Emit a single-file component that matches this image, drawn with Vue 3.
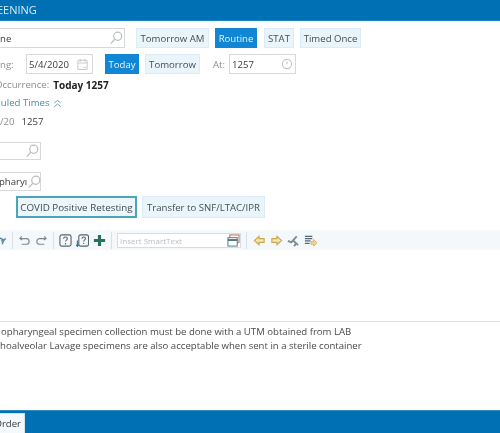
<script setup>
const frequency = [
  { label: 'Tomorrow AM', size: 'w-am' },
  { label: 'Routine', size: 'w-routine', active: true },
  { label: 'STAT', size: 'w-stat' },
  { label: 'Timed Once', size: 'w-timed' },
]
</script>

<template>
  <div class="page">
    <header class="title"><span>EENING</span></header>

    <main class="form">
      <div class="row row-priority">
        <label class="field field-name">
          <span class="value">ne</span>
          <svg class="search" viewBox="0 0 16 16"><circle cx="10" cy="6" r="4.600" /><path d="M6.600 9.400l-4.600 5" /></svg>
        </label>
        <div class="pills">
          <button v-for="f in frequency" :key="f.label" class="pill" :class="[f.size, { active: f.active }]">{{ f.label }}</button>
        </div>
      </div>

      <div class="row row-date">
        <span class="label cut-label">ng:</span>
        <label class="field field-date">
          <span class="value">5/4/2020</span>
          <svg class="cal" viewBox="0 0 14 14"><rect x="2" y="2.500" width="10" height="10" rx="1" /><path d="M2 5.500h10M4.500 1v3M9.500 1v3M8 10h3" /></svg>
        </label>
        <button class="pill active today">Today</button>
        <button class="pill w-tomorrow">Tomorrow</button>
        <span class="label at">At:</span>
        <label class="field field-time">
          <span class="value">1257</span>
          <svg class="clock" viewBox="0 0 14 14"><circle cx="7" cy="7" r="5.400" /><path d="M7 4v3.400" /></svg>
        </label>
      </div>

      <div class="occurrence"><span class="label">Occurrence:</span><b>Today 1257</b></div>
      <div class="schedule"><span>duled Times</span>
        <svg viewBox="0 0 10 10"><path d="M1.500 4.500L5 1.500l3.500 3M1.500 8.500L5 5.500l3.500 3" /></svg>
      </div>
      <div class="times"><span class="label">/20</span><span>1257</span></div>

      <label class="field field-short first-short">
        <svg class="search" viewBox="0 0 16 16"><circle cx="10" cy="6" r="4.600" /><path d="M6.600 9.400l-4.600 5" /></svg>
      </label>
      <label class="field field-short second-short">
        <span class="value">pharyı</span>
        <svg class="search" viewBox="0 0 16 16"><circle cx="10" cy="6" r="4.600" /><path d="M6.600 9.400l-4.600 5" /></svg>
      </label>

      <div class="row row-reason">
        <button class="pill selected">COVID Positive Retesting</button>
        <button class="pill wide">Transfer to SNF/LTAC/IPR</button>
      </div>

      <div class="toolbar">
        <svg class="tool swirl" viewBox="0 0 7 14"><path d="M-1 4l5 2.500L2 11" /><path d="M1 8l5-3" /></svg>
        <i class="sep"></i>
        <svg class="tool" viewBox="0 0 14 14"><path d="M4 2.500L2 5l2.500 1.500M2.500 5H9a3 3 0 010 6H4" /></svg>
        <svg class="tool" viewBox="0 0 14 14"><path d="M10 2.500L12 5 9.500 6.500M11.500 5H5a3 3 0 000 6h5" /></svg>
        <i class="sep"></i>
        <svg class="tool help" viewBox="0 0 14 14"><rect x="1" y="1" width="12" height="12" rx="2" /><path d="M5 5.200a2 2 0 114 0c0 1.300-2 1.500-2 3M7 9.800v1.400" /></svg>
        <svg class="tool help" viewBox="0 0 14 14"><rect x="3" y="1" width="10.500" height="12" rx="2" /><path d="M6.500 5a1.800 1.800 0 113.600 0c0 1.300-1.800 1.500-1.800 3M8.300 9.500v1.400" /><path class="teal" d="M1.500 7v6M0 11.500l1.500 2 1.500-2" /></svg>
        <svg class="tool plus" viewBox="0 0 14 14"><path d="M5.300 1h3.400v4.300H13v3.400H8.700V13H5.300V8.700H1V5.300h4.300z" /></svg>
        <i class="sep"></i>
        <label class="smart">
          <span>Insert SmartText</span>
          <svg viewBox="0 0 14 14"><rect x="3" y="1" width="10" height="8" fill="#f3f6f8" stroke="#b56a5f" /><rect x="1" y="4" width="10" height="9" fill="#fff" stroke="#4d7284" /><path d="M1 6.500h10" stroke="#4d7284" stroke-width="2" /></svg>
        </label>
        <i class="sep after-smart"></i>
        <svg class="tool arrow" viewBox="0 0 14 14"><path d="M6.500 2.500L1.500 7l5 4.500V9H12V5H6.500z" /></svg>
        <svg class="tool arrow" viewBox="0 0 14 14"><path d="M7.500 2.500l5 4.500-5 4.500V9H2V5h5.500z" /></svg>
        <svg class="tool check" viewBox="0 0 14 14"><path d="M1 7.500l3.500 1.500L10.500 2.500" /><path d="M6 6.500l6 5.500" /><path d="M7.500 13l2.500-3" /></svg>
        <svg class="tool list" viewBox="0 0 14 14"><path d="M1 2.500h8M1 5h8M1 7.500h6M1 10h5" /><path class="gold" d="M7.500 8h3V6l3.500 3.500-3.500 3.500v-2h-3z" /></svg>
      </div>

      <div class="notes-space"></div>

      <section class="notes">
        <p class="first-note">opharyngeal specimen collection must be done with a UTM obtained from LAB</p>
        <p>hoalveolar Lavage specimens are also acceptable when sent in a sterile container</p>
      </section>
    </main>

    <footer class="footer"><div class="tab"><span>Order</span></div></footer>
  </div>
</template>

<style>
html, body { margin: 0; background: #fff; }
</style>

<style scoped>
.page {
  width: 500px;
  height: 433px;
  display: flex;
  flex-direction: column;
  overflow: hidden;
  background: #fff;
  color: #3c3c3c;
  font: 9.600px "Open Sans", "Noto Sans", sans-serif;
  filter: blur(0.35px);
}
.title {
  height: 21px;
  flex: none;
  background: #0070b5;
  color: #d9edf7;
  font-size: 11px;
  line-height: 20px;
  border-bottom: 1px solid #1c88c2;
  box-sizing: border-box;
  overflow: hidden;
}
.title span { display: block; margin-left: -3px; }
.form { flex: 1; display: flex; flex-direction: column; min-height: 0; }
.row { display: flex; align-items: center; }
.row-priority { margin-top: 7px; height: 20px; }
.row-date { margin-top: 6px; height: 20px; }
.field {
  display: flex;
  align-items: center;
  justify-content: space-between;
  box-sizing: border-box;
  height: 20px;
  border: 1px solid #d8d8d8;
  background: #fff;
  color: #3c3c3c;
  padding: 0 1px 0 2px;
}
.field-name { width: 126px; margin-left: -1px; border-left: 0; padding-left: 1px; }
.value { white-space: nowrap; }
.search { width: 14px; height: 14px; flex: none; fill: none; stroke: #b9bfc2; stroke-width: 1.400; }
.pills { display: flex; margin-left: 11px; }
.pill {
  box-sizing: border-box;
  height: 20px;
  padding: 0;
  border: 1px solid #dcecf4;
  background: #e9f5fb;
  color: #454f55;
  font: inherit;
  white-space: nowrap;
}
.pill.active { background: #1186d4; border-color: #1186d4; color: #e2f3fc; }
.w-am { width: 73px; margin-right: 6px; }
.w-routine { width: 42px; margin-right: 7px; }
.w-stat { width: 30px; margin-right: 6px; }
.w-timed { width: 61px; }
.w-tomorrow { width: 55px; }
.label { color: #8a8f92; }
.cut-label { width: 26px; flex: none; }
.field-date { width: 67px; padding-right: 3px; }
.cal { width: 13px; height: 13px; fill: none; stroke: #c8cccf; stroke-width: 1.100; }
.today { margin-left: 12px; margin-right: 6px; width: 34px; }
.at { margin-left: 13px; width: 16px; flex: none; }
.field-time { width: 67px; padding-right: 2px; }
.clock { width: 12px; height: 12px; fill: none; stroke: #c6c6c6; stroke-width: 1.300; }
.occurrence { margin: 4px 0 0 -5px; height: 14px; line-height: 14px; display: flex; gap: 4px; }
.occurrence b { color: #222; font-size: 10px; font-weight: 700; }
.schedule {
  margin: 4px 0 0 -5px;
  height: 14px;
  line-height: 14px;
  color: #4d8ea3;
  display: flex;
  align-items: center;
  gap: 4px;
}
.schedule svg { width: 9px; height: 9px; fill: none; stroke: #6b9fb0; stroke-width: 1.100; }
.times { margin-top: 5px; height: 14px; line-height: 14px; display: flex; gap: 7px; }
.field-short { width: 42px; margin-left: -1px; border-left: 0; flex: none; }
.first-short { height: 18px; margin-top: 13px; justify-content: flex-end; }
.second-short { height: 19px; margin-top: 12px; padding: 0; }
.row-reason { margin-top: 5px; gap: 5px; padding-left: 16px; height: 22px; }
.selected {
  width: 121px;
  height: 22px;
  border: 2px solid #48a5ba;
  background: #edf7fb;
  color: #3e4a50;
  font-size: 9.800px;
}
.wide { width: 123px; height: 22px; }
.toolbar {
  margin-top: 12px;
  height: 20px;
  flex: none;
  background: #f4f8fb;
  display: flex;
  align-items: center;
  gap: 4px;
  box-sizing: border-box;
  overflow: hidden;
}
.tool { width: 13px; height: 13px; flex: none; fill: none; stroke: #7c8a93; stroke-width: 1.200; }
.swirl { width: 7px; stroke: #5d8a9f; stroke-width: 1.600; }
.sep { width: 1px; height: 17px; flex: none; background: #d7e1e7; margin: 0 1px; }
.after-smart { margin-right: 2px; }
.help { stroke: #59656c; }
.help .teal { stroke: #2b7a9b; }
.plus { fill: #27735a; stroke: none; }
.arrow { fill: #f6e6b3; stroke: #c9a84d; }
.check { stroke: #7d8a91; stroke-width: 2; }
.gold { stroke: #c9a84d; fill: #f3d98b; }
.list { stroke: #526773; stroke-width: 1.400; }
.list .gold { stroke-width: 0.800; }
.smart {
  width: 124px;
  height: 15px;
  box-sizing: border-box;
  flex: none;
  border: 1px solid #d9dde0;
  background: #fff;
  display: flex;
  align-items: center;
  justify-content: space-between;
  padding: 0 0 0 2px;
  color: #b9bec2;
  font-size: 8px;
}
.smart svg { width: 13px; height: 13px; }
.notes-space { flex: 1; }
.notes {
  height: 89px;
  flex: none;
  box-sizing: border-box;
  border-top: 1px solid #e2e2e2;
  padding-top: 3px;
  color: #4a4a4a;
}
.notes p { margin: 0; height: 14px; line-height: 14px; white-space: nowrap; }
.first-note { padding-left: 1px; }
.footer { height: 23px; flex: none; background: #0070b5; border-top: 1px solid #2a8ec4; box-sizing: border-box; display: flex; align-items: flex-end; }
.tab {
  width: 25px;
  height: 20px;
  box-sizing: border-box;
  padding-right: 3px;
  border-top: 1px solid #cfe4ee;
  border-right: 1px solid #cfe4ee;
  background: #f3f9fc;
  color: #3c3c3c;
  display: flex;
  align-items: center;
  justify-content: flex-end;
  overflow: hidden;
}
.tab span { flex: none; }
</style>
